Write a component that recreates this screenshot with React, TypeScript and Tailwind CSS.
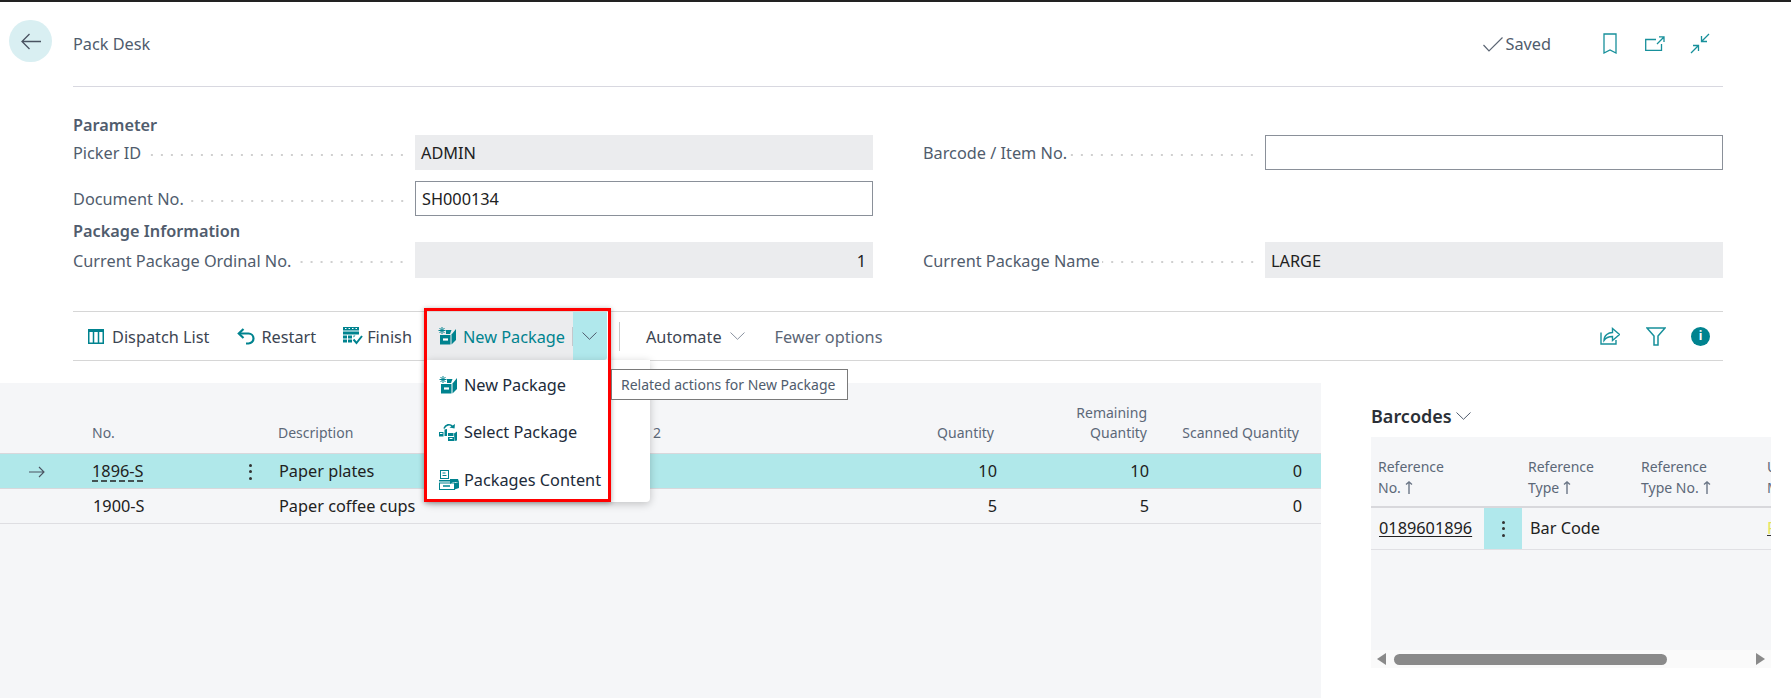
import type { ReactNode } from 'react'

const teal = '#00838f'

function IconDispatch() {
  return (
    <svg width="16" height="15" viewBox="0 0 16 15" fill="none" stroke={teal}>
      <rect x="0.75" y="0.75" width="14.5" height="13.5" strokeWidth="1.5" />
      <path d="M0 2h16" strokeWidth="2" />
      <path d="M5.500 2v12M10.500 2v12" strokeWidth="1.500" />
    </svg>
  )
}

function IconRestart() {
  return (
    <svg width="18" height="17" viewBox="0 0 18 17" fill="none" stroke={teal} strokeWidth="2.200">
      <path d="M6.500 1 1.800 5.500l4.700 4.500" />
      <path d="M2 5.500h9.500a5 5 0 0 1 0 10H9" />
    </svg>
  )
}

function IconFinish() {
  return (
    <svg width="20" height="18" viewBox="0 0 20 18" fill="none">
      <path d="M0 0h16v3.500H0z" fill={teal} />
      <path d="M2 1.500h1.500M5.500 1.500H7M9 1.500h1.500M12.500 1.500H14" stroke="#fff" />
      <path d="M0 4.500h16v3H0zM0 8.500h4v3H0zM5 8.500h4v3H5zM10.500 8.500h2l-2 2zM0 12.500h4v3H0zM5 12.500h4v3H5z" fill={teal} />
      <path d="m10.500 12.500 3 3.500 5.500-7" stroke={teal} strokeWidth="2" />
    </svg>
  )
}

function IconNewPackage() {
  return (
    <svg width="18" height="18" viewBox="0 0 18 18" fill="none">
      <path d="M4 0v7M.5 3.500h7M1.500 1l5 5M6.500 1l-5 5" stroke={teal} strokeWidth="1" />
      <path d="M8 3h5.500L12 7H8z" fill={teal} />
      <path d="M2 8h10.500v9.500H2z" fill={teal} />
      <path d="M13.500 7.500 18 2v11l-4.500 4.500z" fill={teal} />
      <path d="M5 12.500h5" stroke="#fff" strokeWidth="2.200" />
    </svg>
  )
}

function IconSelectPackage() {
  return (
    <svg width="18" height="18" viewBox="0 0 18 18" fill="none">
      <path d="M5 5.500C6.500 1.500 11 .5 13.500 3.500" stroke={teal} strokeWidth="1.600" />
      <path d="m10.500 4.500 5 1 .5-4.500z" fill={teal} />
      <path d="M0 9h4.500v4.500H0zM5.500 6.500 8 6v7H5.500z" fill={teal} />
      <path d="M1 10.500h2.500" stroke="#fff" />
      <path d="M9 10h5.500v3H9zM9 14h6v4H9zM15 10.500l3-2v9l-2.500.5z" fill={teal} />
      <path d="M10.500 15.500h3" stroke="#fff" />
    </svg>
  )
}

function IconPackagesContent() {
  return (
    <svg width="20" height="20" viewBox="0 0 20 20" fill="none">
      <rect x="1.500" y="0.500" width="8" height="8" stroke={teal} />
      <path d="M3.500 3h3M3.500 5.500h4" stroke={teal} />
      <path d="M0 10h11v1.500H0z" fill={teal} />
      <path d="M11 9h8l1 3h-6l-3 2z" fill={teal} />
      <rect x="0.500" y="13" width="15" height="6.500" stroke={teal} />
      <path d="M4 16h7" stroke={teal} strokeWidth="1.500" />
      <path d="m15.500 13 4.500-1v6l-4.500 1.500z" fill={teal} />
    </svg>
  )
}

function Chevron({ className = 'stroke-[#505c6d]' }: { className?: string }) {
  return (
    <svg width="15" height="8" viewBox="0 0 15 8" fill="none" className={className}>
      <path d="m.5.500 7 6.800 7-6.800" strokeWidth="1" />
    </svg>
  )
}

function Kebab() {
  return (
    <span className="flex flex-col gap-[3.500px]">
      <span className="w-[3px] h-[3px] rounded-full bg-[#333]" />
      <span className="w-[3px] h-[3px] rounded-full bg-[#333]" />
      <span className="w-[3px] h-[3px] rounded-full bg-[#333]" />
    </span>
  )
}

function SortArrow() {
  return (
    <svg width="8" height="13" viewBox="0 0 8 13" fill="none" stroke="#6b7686" strokeWidth="1.400" className="inline-block ml-[4px] align-[-1px]">
      <path d="M4 1v12M1 3.500 4 1l3 2.500" />
    </svg>
  )
}

function Field({ label, value, readOnly, right }: { label: string; value?: string; readOnly?: boolean; right?: boolean }) {
  return (
    <div className="flex items-center h-full">
      <div className="w-[342px] flex items-center shrink-0 pt-[2px]">
        <span className="text-[#505c6d] whitespace-nowrap">{label}</span>
        <span className="flex-1 ml-[2px] mr-[8px] h-[4px] mt-[2px] bg-[radial-gradient(circle,#cfcfcf_1px,transparent_1.3px)] bg-[length:10px_4px] bg-repeat-x bg-right" />
      </div>
      <div
        className={`flex-1 h-full flex items-center px-[6px] pt-[2px] text-[#212121] ${right ? 'justify-end pr-[7px]' : ''} ${
          readOnly ? 'bg-[#ebecee]' : 'border border-[#8a9099]'
        }`}
      >
        {value}
      </div>
    </div>
  )
}

function ToolBtn({ icon, children, className = '' }: { icon: ReactNode; children: ReactNode; className?: string }) {
  return (
    <div className={`flex items-center text-[#3c4552] whitespace-nowrap ${className}`}>
      {icon}
      <span className="pt-[2px]">{children}</span>
    </div>
  )
}

function MenuItem({ icon, label }: { icon: ReactNode; label: string }) {
  return (
    <div className="h-[47.500px] flex items-center pl-[12px] text-[#212b3a]">
      <span className="w-[25px] shrink-0">{icon}</span>
      {label}
    </div>
  )
}

const listCols = 'grid grid-cols-[92px_146px_24px_298px_1fr_152px_152px_153px] pr-[19px]'
const barcodeCols = 'grid grid-cols-[113px_38px_111px_134px_1fr]'

export default function App() {
  return (
    <div className="relative w-[1791px] h-[698px] overflow-hidden bg-white font-['Noto_Sans',sans-serif] text-[16.3px]">
      <div className="h-[2px] bg-[#222]" />

      {/* page header */}
      <div className="flex h-[86px] pl-[9px] pr-[68px]">
        <div className="w-[43px] h-[42px] mt-[18px] rounded-full bg-[#d9eff2] flex items-center justify-center shrink-0">
          <svg width="20" height="17" viewBox="0 0 20 17" fill="none" stroke="#4a5361" strokeWidth="1.300">
            <path d="M20 8.500H1M8.500 1 1 8.500 8.500 16" />
          </svg>
        </div>
        <div className="flex-1 ml-[21px] mb-[1px] flex items-center border-b border-[#d8d8e0] pr-[13px]">
          <span className="text-[#505c6d]">Pack Desk</span>
          <div className="ml-auto flex items-center text-[#505c6d]">
            <svg width="20" height="15" viewBox="0 0 20 15" fill="none" stroke="#5c6674" strokeWidth="1.200" className="mr-[2px]">
              <path d="m.5 8 5.500 6L19.500.500" />
            </svg>
            <span className="pt-[1px]">Saved</span>
            <svg width="14" height="21" viewBox="0 0 14 21" fill="none" stroke="#17909b" strokeWidth="1.300" className="ml-[52px] mb-[2px]">
              <path d="M1 1h12v19l-6-3-6 3z" />
            </svg>
            <svg width="20" height="15" viewBox="0 0 20 15" fill="none" stroke="#17909b" strokeWidth="1.300" className="ml-[28px] mb-[2px]">
              <path d="M11 3.500H.7v10.800h15.800V8M12 8l6.500-6.500M14 .8h5V6" />
            </svg>
            <svg width="20" height="21" viewBox="0 0 20 21" fill="none" stroke="#17909b" strokeWidth="1.300" className="ml-[25px] mb-[2px]">
              <path d="M19 1l-7.500 7.500M11.500 3v5.500H17M1 20l7.500-7.500M3 12.500h5.500V18" />
            </svg>
          </div>
        </div>
      </div>

      {/* form */}
      <div className="ml-[73px] mr-[68px]">
        <div className="h-[22px] mt-[25px] pt-[1px] leading-[22px] font-semibold text-[#505c6d]">Parameter</div>
        <div className="grid grid-cols-2 gap-x-[50px] grid-rows-[35px_35px] gap-y-[11px]">
          <Field label="Picker ID" value="ADMIN" readOnly />
          <Field label="Barcode / Item No." />
          <Field label="Document No." value="SH000134" />
        </div>
        <div className="h-[26px] pt-[2px] leading-[26px] font-semibold text-[#505c6d]">Package Information</div>
        <div className="grid grid-cols-2 gap-x-[50px] h-[36px]">
          <Field label="Current Package Ordinal No." value="1" readOnly right />
          <Field label="Current Package Name" value="LARGE" readOnly />
        </div>

        {/* action bar */}
        <div className="mt-[33px] h-[50px] border-y border-[#d6d6d6] flex items-center pl-[15px] pr-[13px]">
          <ToolBtn icon={<IconDispatch />}>
            <span className="ml-[8px]">Dispatch List</span>
          </ToolBtn>
          <ToolBtn icon={<IconRestart />} className="ml-[28px]">
            <span className="ml-[6px]">Restart</span>
          </ToolBtn>
          <ToolBtn icon={<IconFinish />} className="ml-[27px]">
            <span className="ml-[4px]">Finish</span>
          </ToolBtn>

          <div className="relative ml-[15px] w-[180px] h-full flex shrink-0">
            <div className="flex-1 bg-[#ebecee] flex items-center pl-[11px] text-[#00838f] whitespace-nowrap">
              <IconNewPackage />
              <span className="ml-[7px] pt-[2px]">New Package</span>
            </div>
            <div className="w-[34px] bg-[#b0e8ec] rounded-br-[3px] flex items-center justify-center relative">
              <span className="absolute left-[-1px] top-[15px] h-[19px] w-[1px] bg-[#c4c8cc]" />
              <Chevron />
            </div>

            {/* dropdown */}
            <div className="absolute top-full left-0 w-[223px] h-[142px] pt-[1px] bg-white rounded-br-[4px] shadow-[0_2px_8px_rgba(0,0,0,0.22)] z-10">
              <MenuItem icon={<IconNewPackage />} label="New Package" />
              <MenuItem icon={<IconSelectPackage />} label="Select Package" />
              <MenuItem icon={<IconPackagesContent />} label="Packages Content" />
            </div>
            {/* annotation */}
            <div className="absolute left-[-3px] top-[-4px] w-[187px] h-[194px] border-[3px] border-[#ff0000] shadow-[0_1px_5px_rgba(0,0,0,0.35)] z-20 pointer-events-none" />
            {/* tooltip */}
            <div className="absolute left-[184px] top-[57px] h-[31px] w-[237px] bg-white border border-[#7a7a7a] flex items-center pl-[9px] text-[14px] text-[#505c6d] whitespace-nowrap z-30">
              Related actions for New Package
            </div>
          </div>

          <span className="ml-[12px] h-[29px] w-[1px] bg-[#c8c8c8]" />
          <div className="ml-[26px] flex items-center text-[#3c4552]">
            <span className="pt-[2px]">Automate</span>
            <Chevron className="ml-[8px] stroke-[#8a93a0]" />
          </div>
          <span className="ml-[30px] pt-[2px] text-[#5b6676]">Fewer options</span>

          <div className="ml-auto flex items-center">
            <svg width="20" height="18" viewBox="0 0 20 18" fill="none" stroke="#17909b" strokeWidth="1.400">
              <path d="M1 5.500V17h15v-4" />
              <path d="M4 13.500C4 8 8.500 5.500 12.500 5.500V1.500l7 6-7 6V9.500C9 9.500 6 10.500 4 13.500z" />
            </svg>
            <svg width="20" height="19" viewBox="0 0 20 19" fill="none" stroke="#17909b" strokeWidth="1.500" className="ml-[26px]">
              <path d="M1 1h18l-7 8v9H8V9z" />
            </svg>
            <div className="ml-[25px] w-[19px] h-[19px] rounded-full bg-[#00838f] flex items-center justify-center text-white text-[12px] font-bold leading-none">
              i
            </div>
          </div>
        </div>
      </div>

      {/* lower part */}
      <div className="mt-[22px] flex h-[315px]">
        <div className="w-[1321px] bg-[#f5f6f8] text-[#212121]">
          <div className={`${listCols} h-[71px] items-end pb-[10px] border-b border-[#d8d8dc] text-[14px] leading-[20px] text-[#5c6878]`}>
            <span />
            <span>No.</span>
            <span />
            <span className="pl-[16px]">Description</span>
            <span className="pl-[14px] whitespace-nowrap">Description 2</span>
            <span className="text-right pr-[3px]">Quantity</span>
            <span className="text-right pr-[2px]">
              Remaining
              <br />
              Quantity
            </span>
            <span className="text-right pr-[3px] whitespace-nowrap">Scanned Quantity</span>
          </div>
          <div className={`${listCols} h-[35px] items-center pt-[1px] bg-[#b0e8ea] border-b border-[#d8d8dc]`}>
            <span className="pl-[29px]">
              <svg width="16" height="12" viewBox="0 0 16 12" fill="none" stroke="#4a5361" strokeWidth="1.100">
                <path d="M0 6h15M10 1l5 5-5 5" />
              </svg>
            </span>
            <span className="underline decoration-dashed underline-offset-[3px]">1896-S</span>
            <span className="flex justify-center">
              <Kebab />
            </span>
            <span className="pl-[17px]">Paper plates</span>
            <span />
            <span className="text-right">10</span>
            <span className="text-right">10</span>
            <span className="text-right">0</span>
          </div>
          <div className={`${listCols} h-[35px] items-center pt-[1px] border-b border-[#dedee2]`}>
            <span />
            <span className="pl-[1px]">1900-S</span>
            <span />
            <span className="pl-[17px]">Paper coffee cups</span>
            <span />
            <span className="text-right">5</span>
            <span className="text-right">5</span>
            <span className="text-right">0</span>
          </div>
        </div>

        <div className="ml-[50px] w-[400px]">
          <div className="flex items-center h-[54px] pt-[12px] text-[18px] font-semibold text-[#2b2f36]">
            Barcodes
            <Chevron className="ml-[4px] stroke-[#505c6d]" />
          </div>
          <div className="h-[231px] bg-[#f5f6f8] flex flex-col overflow-hidden text-[#212121]">
            <div className={`${barcodeCols} h-[71px] items-end pb-[8px] border-b-2 border-[#d8d8dc] text-[14px] leading-[21px] text-[#5c6878]`}>
              <span className="pl-[7px]">
                Reference
                <br />
                No.
                <SortArrow />
              </span>
              <span />
              <span className="pl-[6px]">
                Reference
                <br />
                Type
                <SortArrow />
              </span>
              <span className="pl-[8px]">
                Reference
                <br />
                Type No.
                <SortArrow />
              </span>
              <span className="whitespace-nowrap">
                Unit of
                <br />
                Measure
              </span>
            </div>
            <div className={`${barcodeCols} h-[42px] items-center border-b border-[#e0e0e4]`}>
              <span className="pl-[8px] underline underline-offset-2">0189601896</span>
              <span className="h-full bg-[#b0e8ec] flex items-center justify-center">
                <Kebab />
              </span>
              <span className="pl-[8px]">Bar Code</span>
              <span />
              <span className="underline decoration-[#333] text-[#e6e65a] whitespace-nowrap">PCS</span>
            </div>
            <div className="flex-1" />
            <div className="h-[18px] bg-[#fafafa] flex items-center pl-[6px] pr-[6px]">
              <svg width="9" height="12" viewBox="0 0 9 12" fill="#8a8a8a">
                <path d="M9 0v12L0 6z" />
              </svg>
              <div className="ml-[8px] w-[273px] h-[11px] rounded-full bg-[#8a8a8a]" />
              <svg width="9" height="12" viewBox="0 0 9 12" fill="#8a8a8a" className="ml-auto">
                <path d="M0 0v12l9-6z" />
              </svg>
            </div>
          </div>
        </div>
      </div>
    </div>
  )
}
